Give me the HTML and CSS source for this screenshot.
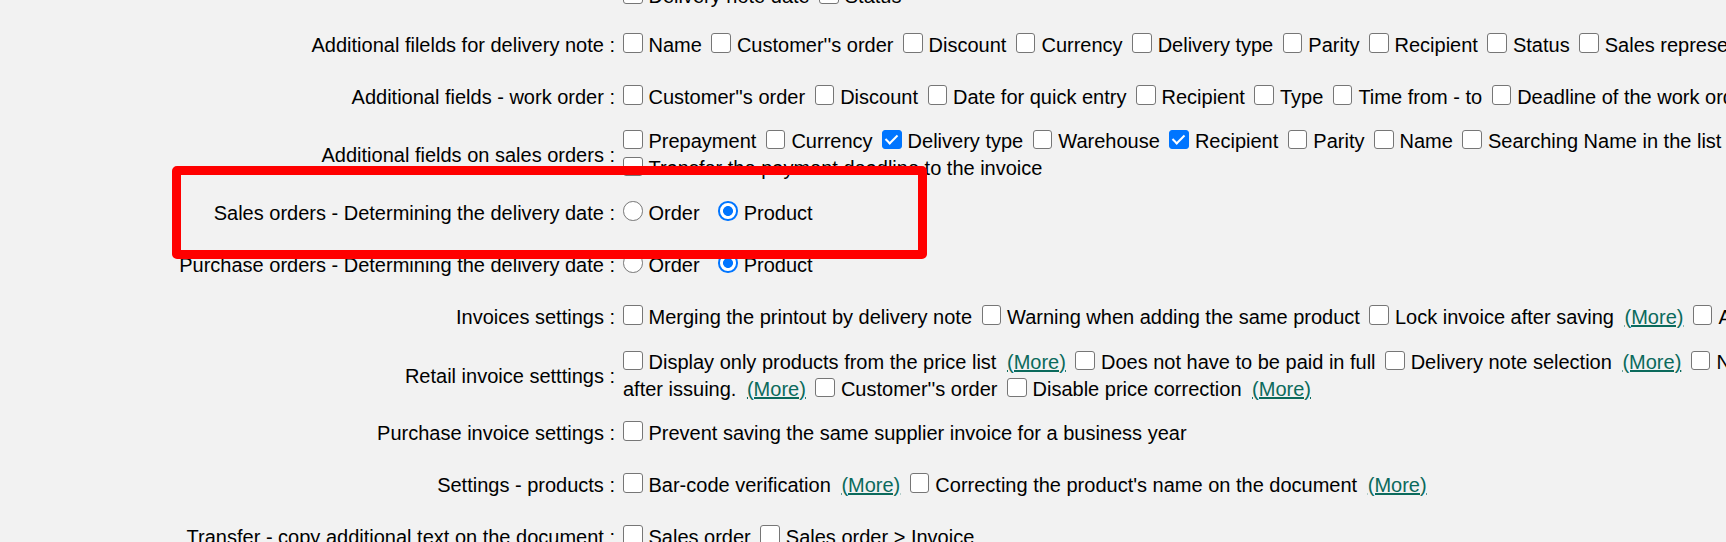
FILE: index.html
```html
<!DOCTYPE html>
<html lang="en">
<head>
<meta charset="utf-8">
<title>Document settings</title>
<link rel="stylesheet" href="styles.css">
</head>
<body>
<div class="page">

  <div class="row row-cut">
    <div class="label">Additional fields for the delivery note list :</div>
    <div class="opts">
      <span class="opt"><input type="checkbox" class="cb"><label>Name</label></span>
      <span class="opt"><input type="checkbox" class="cb"><label>Customer''s order</label></span>
      <span class="opt"><input type="checkbox" class="cb"><label>Discount</label></span>
      <span class="opt"><input type="checkbox" class="cb"><label>Currency</label></span>
      <span class="opt"><input type="checkbox" class="cb"><label>Delivery type</label></span>
      <span class="opt"><input type="checkbox" class="cb"><label>Parity</label></span>
      <span class="opt"><input type="checkbox" class="cb"><label>Recipient</label></span>
      <span class="opt"><input type="checkbox" class="cb"><label>Sales representative</label></span>
      <span class="opt"><input type="checkbox" class="cb"><label>Delivery note date</label></span>
      <span class="opt"><input type="checkbox" class="cb"><label>Status</label></span>
    </div>
  </div>

  <div class="row">
    <div class="label">Additional filelds for delivery note :</div>
    <div class="opts">
      <span class="opt"><input type="checkbox" class="cb"><label>Name</label></span>
      <span class="opt"><input type="checkbox" class="cb"><label>Customer''s order</label></span>
      <span class="opt"><input type="checkbox" class="cb"><label>Discount</label></span>
      <span class="opt"><input type="checkbox" class="cb"><label>Currency</label></span>
      <span class="opt"><input type="checkbox" class="cb"><label>Delivery type</label></span>
      <span class="opt"><input type="checkbox" class="cb"><label>Parity</label></span>
      <span class="opt"><input type="checkbox" class="cb"><label>Recipient</label></span>
      <span class="opt"><input type="checkbox" class="cb"><label>Status</label></span>
      <span class="opt"><input type="checkbox" class="cb"><label>Sales representative</label></span>
    </div>
  </div>

  <div class="row">
    <div class="label">Additional fields - work order :</div>
    <div class="opts">
      <span class="opt"><input type="checkbox" class="cb"><label>Customer''s order</label></span>
      <span class="opt"><input type="checkbox" class="cb"><label>Discount</label></span>
      <span class="opt"><input type="checkbox" class="cb"><label>Date for quick entry</label></span>
      <span class="opt"><input type="checkbox" class="cb"><label>Recipient</label></span>
      <span class="opt"><input type="checkbox" class="cb"><label>Type</label></span>
      <span class="opt"><input type="checkbox" class="cb"><label>Time from - to</label></span>
      <span class="opt"><input type="checkbox" class="cb"><label>Deadline of the work order</label></span>
    </div>
  </div>

  <div class="row">
    <div class="label">Additional fields on sales orders :</div>
    <div class="opts">
      <span class="opt"><input type="checkbox" class="cb"><label>Prepayment</label></span>
      <span class="opt"><input type="checkbox" class="cb"><label>Currency</label></span>
      <span class="opt"><input type="checkbox" class="cb" checked><label>Delivery type</label></span>
      <span class="opt"><input type="checkbox" class="cb"><label>Warehouse</label></span>
      <span class="opt"><input type="checkbox" class="cb" checked><label>Recipient</label></span>
      <span class="opt"><input type="checkbox" class="cb"><label>Parity</label></span>
      <span class="opt"><input type="checkbox" class="cb"><label>Name</label></span>
      <span class="opt"><input type="checkbox" class="cb"><label>Searching Name in the list</label></span>
      <span class="opt"><input type="checkbox" class="cb"><label>Transfer the payment deadline to the invoice</label></span>
    </div>
  </div>

  <div class="row highlighted">
    <div class="label">Sales orders - Determining the delivery date :</div>
    <div class="opts">
      <span class="opt radio-opt"><input type="radio" class="rb" name="so_date"><label>Order</label></span>
      <span class="opt radio-opt"><input type="radio" class="rb" name="so_date" checked><label>Product</label></span>
    </div>
    <div class="annotation"></div>
  </div>

  <div class="row">
    <div class="label">Purchase orders - Determining the delivery date :</div>
    <div class="opts">
      <span class="opt radio-opt"><input type="radio" class="rb" name="po_date"><label>Order</label></span>
      <span class="opt radio-opt"><input type="radio" class="rb" name="po_date" checked><label>Product</label></span>
    </div>
  </div>

  <div class="row">
    <div class="label">Invoices settings :</div>
    <div class="opts">
      <span class="opt"><input type="checkbox" class="cb"><label>Merging the printout by delivery note</label></span>
      <span class="opt"><input type="checkbox" class="cb"><label>Warning when adding the same product</label></span>
      <span class="opt"><input type="checkbox" class="cb"><label>Lock invoice after saving</label> <a class="more" href="#">(More)</a></span>
      <span class="opt"><input type="checkbox" class="cb"><label>Archive</label></span>
    </div>
  </div>

  <div class="row row-retail">
    <div class="label">Retail invoice setttings :</div>
    <div class="opts">
      <span class="opt"><input type="checkbox" class="cb"><label>Display only products from the price list</label> <a class="more" href="#">(More)</a></span>
      <span class="opt"><input type="checkbox" class="cb"><label>Does not have to be paid in full</label></span>
      <span class="opt"><input type="checkbox" class="cb"><label>Delivery note selection</label> <a class="more" href="#">(More)</a></span>
      <span class="opt opt-wrap"><input type="checkbox" class="cb"><label>No changes after issuing.</label> <a class="more" href="#">(More)</a></span>
      <span class="opt"><input type="checkbox" class="cb"><label>Customer''s order</label></span>
      <span class="opt"><input type="checkbox" class="cb"><label>Disable price correction</label> <a class="more" href="#">(More)</a></span>
    </div>
  </div>

  <div class="row">
    <div class="label">Purchase invoice settings :</div>
    <div class="opts">
      <span class="opt"><input type="checkbox" class="cb"><label>Prevent saving the same supplier invoice for a business year</label></span>
    </div>
  </div>

  <div class="row">
    <div class="label">Settings - products :</div>
    <div class="opts">
      <span class="opt"><input type="checkbox" class="cb"><label>Bar-code verification</label> <a class="more" href="#">(More)</a></span>
      <span class="opt"><input type="checkbox" class="cb"><label>Correcting the product's name on the document</label> <a class="more" href="#">(More)</a></span>
    </div>
  </div>

  <div class="row">
    <div class="label">Transfer - copy additional text on the document :</div>
    <div class="opts">
      <span class="opt"><input type="checkbox" class="cb"><label>Sales order</label></span>
      <span class="opt"><input type="checkbox" class="cb"><label>Sales order &gt; Invoice</label></span>
    </div>
  </div>

</div>
</body>
</html>
```

FILE: styles.css
```css
html,
body {
  margin: 0;
}

body {
  background: #f2f2f2;
  color: #000;
  font-family: "Liberation Sans", Arial, sans-serif;
  font-size: 20px;
  overflow: hidden;
}

.page {
  margin-top: -49px;
}

.row {
  display: grid;
  grid-template-columns: 615px 1220px;
  column-gap: 8px;
  align-items: center;
  min-height: 52px;
  padding: 5px 0;
  box-sizing: border-box;
  line-height: 27px;
}

.row-cut {
  padding-bottom: 9px;
}

.row-retail {
  padding: 6px 0 4px;
}

.label {
  text-align: right;
  white-space: nowrap;
}

.opt {
  margin-right: 4px;
  white-space: nowrap;
}

.opt-wrap {
  white-space: normal;
}

.radio-opt {
  margin-right: 13px;
}

.cb,
.rb {
  -webkit-appearance: none;
  appearance: none;
  width: 19.5px;
  height: 19.5px;
  margin: 0 6px 0 0;
  vertical-align: -1px;
  box-sizing: border-box;
  border: 1.5px solid #767676;
  background: #fff;
}

.cb {
  border-radius: 3px;
  position: relative;
}

.cb:checked {
  background: #0075ff;
  border-color: #0075ff;
}

.cb:checked::after {
  content: "";
  position: absolute;
  left: 4.6px;
  top: 1px;
  width: 7px;
  height: 12px;
  box-sizing: border-box;
  border: solid #fff;
  border-width: 0 2.6px 2.6px 0;
  transform: rotate(45deg);
}

.rb {
  border-radius: 50%;
}

.rb:checked {
  border: 2px solid #0075ff;
  background: radial-gradient(circle, #0075ff 0 4.6px, #fff 5.3px);
}

.more {
  margin-left: 5px;
  color: #0b6a5c;
  text-decoration: underline;
}

.highlighted {
  position: relative;
}

.annotation {
  position: absolute;
  left: 172px;
  top: -21px;
  width: 755px;
  height: 93px;
  box-sizing: border-box;
  border: 9px solid #ff0000;
  border-radius: 5px;
  z-index: 5;
  pointer-events: none;
}
```
